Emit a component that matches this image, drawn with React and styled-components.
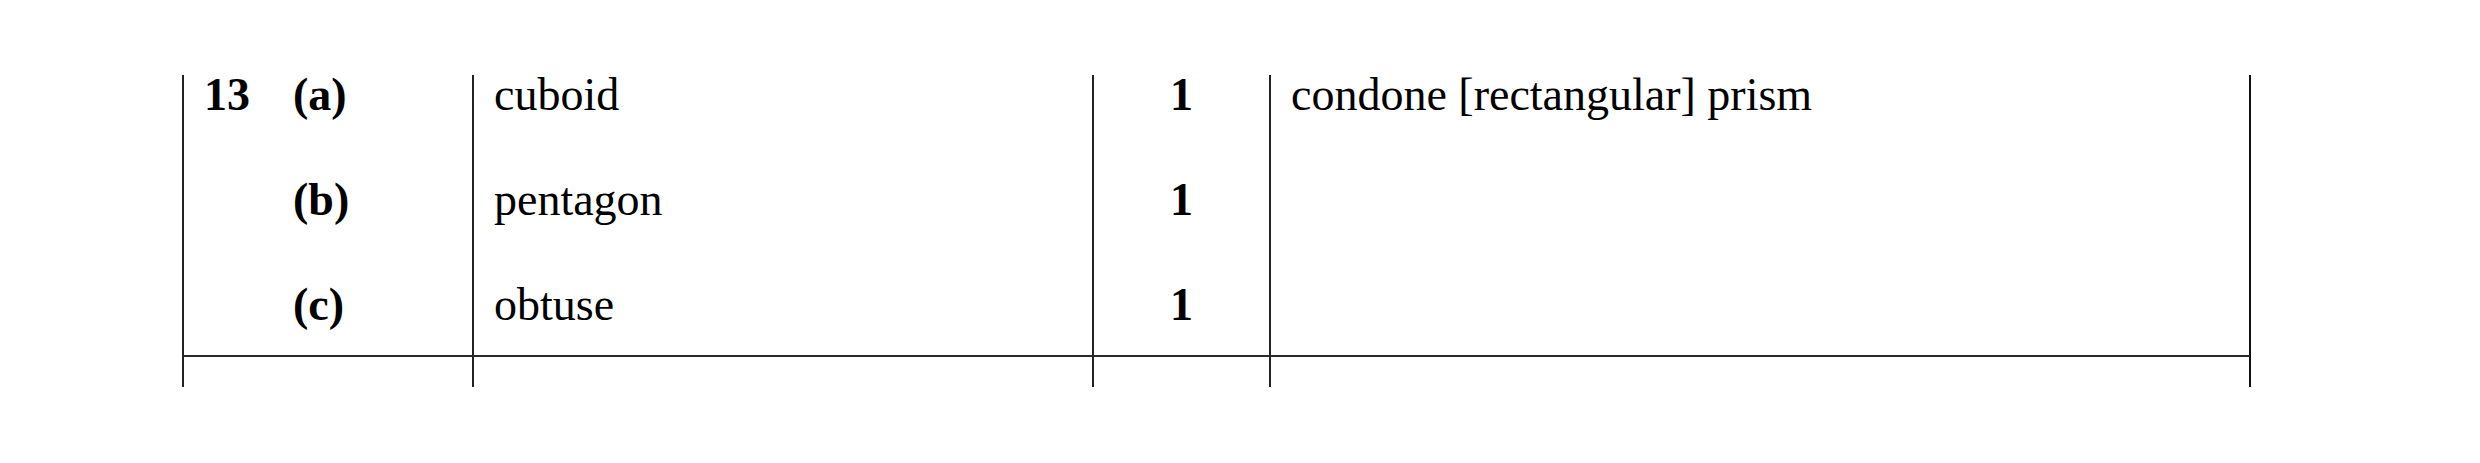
import React from "react";
import styled, { createGlobalStyle } from "styled-components";

const Global = createGlobalStyle`
  html, body { margin: 0; padding: 0; background: #fff; }
  body { font-family: "Liberation Serif", "Times New Roman", serif; color: #000; }
`;

const Page = styled.div`
  width: 2480px;
  height: 463px;
  padding: 75px 0 0 182px;
  box-sizing: border-box;
  background: #fff;
`;

const Table = styled.div`
  display: grid;
  grid-template-columns: 290px 620px 177px 982px;
  grid-template-rows: 280px 32px;
  font-size: 46px;
`;

const Cell = styled.div`
  box-sizing: border-box;
  border-left: 2px solid #222;
  border-right: ${(p) => (p.$last ? "2px solid #111" : "none")};
  border-top: ${(p) => (p.$top ? "2px solid #2a2a2a" : "none")};
  padding: 0 20px;
  display: flex;
  flex-direction: column;
  align-items: ${(p) => (p.$center ? "center" : "stretch")};
  gap: 65px;
`;

const Line = styled.div`
  line-height: 40px;
  height: 40px;
  white-space: nowrap;
  font-weight: ${(p) => (p.$bold ? 700 : 400)};
`;

const PartLine = styled.div`
  display: grid;
  grid-template-columns: 89px auto;
  line-height: 40px;
  height: 40px;
  font-weight: 700;
  white-space: nowrap;
`;

const rows = [
  { q: "13", part: "(a)", answer: "cuboid", mark: "1", note: "condone [rectangular] prism" },
  { q: "", part: "(b)", answer: "pentagon", mark: "1", note: "" },
  { q: "", part: "(c)", answer: "obtuse", mark: "1", note: "" },
];

export default function App() {
  return (
    <Page>
      <Global />
      <Table>
        <Cell>
          {rows.map((r, i) => (
            <PartLine key={i}>
              <span>{r.q}</span>
              <span>{r.part}</span>
            </PartLine>
          ))}
        </Cell>
        <Cell>
          {rows.map((r, i) => (
            <Line key={i}>{r.answer}</Line>
          ))}
        </Cell>
        <Cell $center>
          {rows.map((r, i) => (
            <Line key={i} $bold>
              {r.mark}
            </Line>
          ))}
        </Cell>
        <Cell $last>
          <Line>{rows[0].note}</Line>
        </Cell>
        <Cell $top />
        <Cell $top />
        <Cell $top />
        <Cell $top $last />
      </Table>
    </Page>
  );
}
